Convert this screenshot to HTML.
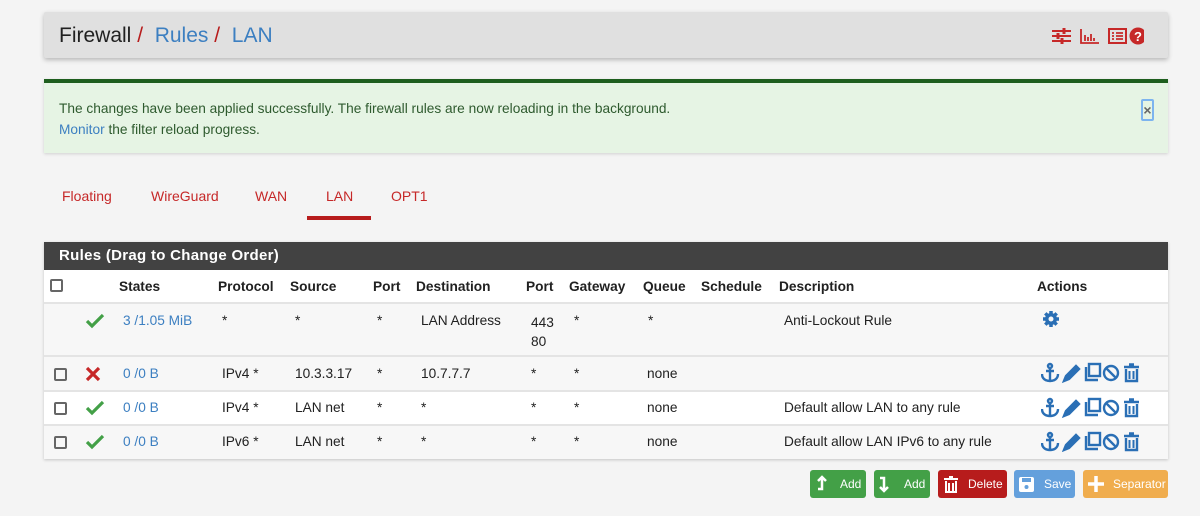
<!DOCTYPE html>
<html><head><meta charset="utf-8"><style>
*{box-sizing:border-box;margin:0;padding:0}
body{width:1200px;height:516px;background:#f4f4f4;font-family:"Liberation Sans",sans-serif;font-size:14px;color:#212121;position:relative;overflow:hidden}
.hdr{position:absolute;left:44px;top:12px;width:1124px;height:46px;background:#e0e0e0;box-shadow:0 2px 5px rgba(0,0,0,.25);border-radius:2px}
.hdr h1{position:absolute;left:15px;top:12px;font-size:21px;font-weight:normal;color:#212121}
.hdr h1 span.l{color:#3c7fc1}.hdr h1 span.s{color:#b71c1c}
.alert{position:absolute;left:44px;top:79px;width:1124px;height:74px;background:#e6f4e4;border-top:4px solid #1e5e1e;box-shadow:0 1px 3px rgba(0,0,0,.15);color:#2e5a2e;font-size:13.7px}
.alert p{position:absolute;left:15px;line-height:21px}
.close{position:absolute;left:1097px;top:16px;width:13px;height:22px;border:2px solid #7db4ef;border-radius:2px;color:#666;font-size:14px;font-weight:bold;text-align:center;line-height:18px}
.tab{position:absolute;top:188px;color:#c62828;font-size:14px}
.tabline{position:absolute;left:307px;top:216px;width:64px;height:4px;background:#b71c1c}
.panel{position:absolute;left:44px;top:242px;width:1124px;height:217px;background:#fff;box-shadow:0 1px 3px rgba(0,0,0,.2)}
.ph{height:28px;background:#424242;color:#fff;font-size:15px;font-weight:bold;padding:5px 15px;letter-spacing:.3px}
.row{position:absolute;left:0;width:1124px;border-top:2px solid #e4e4e4}
.c{position:absolute;font-size:13.7px}
.b{font-weight:bold}
.lnk{color:#3c7fc1}
.cb{position:absolute;width:13px;height:13px;border:2px solid #666;border-radius:2px}
.btn{position:absolute;top:470px;height:28px;border-radius:3px;color:#fff;font-size:12px;line-height:28px}
.ok,.no{position:absolute;left:41px}
</style></head><body>
<div class="hdr"><h1>Firewall <span class="s">/</span>&nbsp; <span class="l">Rules</span> <span class="s">/</span>&nbsp; <span class="l">LAN</span></h1>
<svg style="position:absolute;left:1008px;top:14px" width="92" height="20" viewBox="0 0 92 20">
<g stroke="#c62828" stroke-width="2" fill="none"><path d="M0 5h19M0 10h19M0 15h19"/><path d="M12 2v6M6 7v6M10 12v6" stroke-width="3"/></g>
<g stroke="#c62828" stroke-width="1.8" fill="none"><path d="M29 3v14h18"/><path d="M33 9v6M36 11v4M39 8v7M42 12v3"/></g>
<rect x="57" y="3" width="17" height="14" fill="none" stroke="#c62828" stroke-width="2"/><g stroke="#c62828" stroke-width="1.8"><path d="M60 7h2M64 7h7M60 10h2M64 10h7M60 13h2M64 13h7"/></g>
<circle cx="86" cy="10" r="8.5" fill="#c62828"/><text x="86" y="15" font-size="13" font-weight="bold" fill="#fff" text-anchor="middle" font-family="Liberation Sans">?</text>
</svg></div>
<div class="alert"><p style="top:15px">The changes have been applied successfully. The firewall rules are now reloading in the background.</p><p style="top:36px"><span class="lnk">Monitor</span> the filter reload progress.</p><div class="close">×</div></div>
<div class="tab" style="left:62px">Floating</div><div class="tab" style="left:151px">WireGuard</div><div class="tab" style="left:255px">WAN</div><div class="tab" style="left:326px">LAN</div><div class="tab" style="left:391px">OPT1</div>
<div class="tabline"></div>
<div class="panel"><div class="ph">Rules (Drag to Change Order)</div>
<div class="row" style="top:28px;height:32px;border:none">
<div class="cb" style="left:6px;top:9px"></div>
<div class="c b" style="left:75px;top:9px">States</div><div class="c b" style="left:174px;top:9px">Protocol</div><div class="c b" style="left:246px;top:9px">Source</div><div class="c b" style="left:329px;top:9px">Port</div><div class="c b" style="left:372px;top:9px">Destination</div><div class="c b" style="left:482px;top:9px">Port</div><div class="c b" style="left:525px;top:9px">Gateway</div><div class="c b" style="left:599px;top:9px">Queue</div><div class="c b" style="left:657px;top:9px">Schedule</div><div class="c b" style="left:735px;top:9px">Description</div><div class="c b" style="left:993px;top:9px">Actions</div></div>
<div class="row" style="top:60px;height:53px;background:#f7f7f7">
<svg class="ok" style="top:9px" width="20" height="16"><path d="M2 8l5 5L18 2" stroke="#43a047" stroke-width="3.2" fill="none"/></svg>
<div class="c lnk" style="left:79px;top:9px">3 /1.05 MiB</div><div class="c" style="left:178px;top:9px">*</div><div class="c" style="left:251px;top:9px">*</div><div class="c" style="left:333px;top:9px">*</div><div class="c" style="left:377px;top:9px">LAN Address</div><div class="c" style="left:487px;top:9px;line-height:19px">443<br>80</div><div class="c" style="left:530px;top:9px">*</div><div class="c" style="left:604px;top:9px">*</div><div class="c" style="left:740px;top:9px">Anti-Lockout Rule</div>
<svg style="position:absolute;left:998px;top:6px" width="18" height="18" viewBox="0 0 18 18"><g fill="#2a6fb5"><circle cx="9" cy="9" r="6"/><g stroke="#2a6fb5" stroke-width="3.5"><path d="M9 1v16M1 9h16M3.3 3.3l11.4 11.4M14.7 3.3L3.3 14.7"/></g></g><circle cx="9" cy="9" r="2.5" fill="#f7f7f7"/></svg></div>
<div class="row" style="top:113px;height:35px;background:#f7f7f7">
<div class="cb" style="left:10px;top:11px"></div>
<svg class="no" style="top:9px" width="16" height="16"><path d="M2 2l12 12M14 2L2 14" stroke="#c62828" stroke-width="3.2"/></svg>
<div class="c lnk" style="left:79px;top:9px">0 /0 B</div><div class="c" style="left:178px;top:9px">IPv4 *</div><div class="c" style="left:251px;top:9px">10.3.3.17</div><div class="c" style="left:333px;top:9px">*</div><div class="c" style="left:377px;top:9px">10.7.7.7</div><div class="c" style="left:487px;top:9px">*</div><div class="c" style="left:530px;top:9px">*</div><div class="c" style="left:603px;top:9px">none</div>
</div>
<div class="row" style="top:148px;height:34px;background:#fff">
<div class="cb" style="left:10px;top:10px"></div>
<svg class="ok" style="top:8px" width="20" height="16"><path d="M2 8l5 5L18 2" stroke="#43a047" stroke-width="3.2" fill="none"/></svg>
<div class="c lnk" style="left:79px;top:8px">0 /0 B</div><div class="c" style="left:178px;top:8px">IPv4 *</div><div class="c" style="left:251px;top:8px">LAN net</div><div class="c" style="left:333px;top:8px">*</div><div class="c" style="left:377px;top:8px">*</div><div class="c" style="left:487px;top:8px">*</div><div class="c" style="left:530px;top:8px">*</div><div class="c" style="left:603px;top:8px">none</div><div class="c" style="left:740px;top:8px">Default allow LAN to any rule</div></div>
<div class="row" style="top:182px;height:35px;background:#f7f7f7">
<div class="cb" style="left:10px;top:10px"></div>
<svg class="ok" style="top:8px" width="20" height="16"><path d="M2 8l5 5L18 2" stroke="#43a047" stroke-width="3.2" fill="none"/></svg>
<div class="c lnk" style="left:79px;top:8px">0 /0 B</div><div class="c" style="left:178px;top:8px">IPv6 *</div><div class="c" style="left:251px;top:8px">LAN net</div><div class="c" style="left:333px;top:8px">*</div><div class="c" style="left:377px;top:8px">*</div><div class="c" style="left:487px;top:8px">*</div><div class="c" style="left:530px;top:8px">*</div><div class="c" style="left:603px;top:8px">none</div><div class="c" style="left:740px;top:8px">Default allow LAN IPv6 to any rule</div></div>
</div>
<svg style="position:absolute;left:1041px;top:362px" width="105" height="90" viewBox="0 0 105 90">
<defs><g id="a" fill="none" stroke="#2a6fb5" stroke-width="2.4">
<circle cx="9" cy="3" r="2"/><path d="M9 5v13M5 8h8M1 11c0 5 4 7 8 7s8-2 8-7"/>
<path d="M23 18l2-5 10-10 3 3-10 10z" fill="#2a6fb5"/>
<rect x="48" y="1" width="11" height="12"/><path d="M45 4v13h12"/>
<circle cx="70" cy="10" r="7"/><path d="M65 5l10 10"/>
<path d="M83 4h15M88 1.5h5M85 6v12h11V6" /><path d="M88.5 8v8M92.5 8v8" stroke-width="2"/></g></defs>
<use href="#a" y="1"/><use href="#a" y="36"/><use href="#a" y="70"/></svg>
<div class="btn" style="left:810px;width:56px;background:#43a047"><svg style="position:absolute;left:6px;top:5px" width="12" height="18"><path d="M6 2v12H2M2 6l4-4 4 4" stroke="#fff" stroke-width="2.5" fill="none"/></svg><span style="position:absolute;left:30px">Add</span></div>
<div class="btn" style="left:874px;width:56px;background:#43a047"><svg style="position:absolute;left:4px;top:5px" width="12" height="18"><path d="M2 3h4v12M2 12l4 4 4-4" stroke="#fff" stroke-width="2.5" fill="none"/></svg><span style="position:absolute;left:30px">Add</span></div>
<div class="btn" style="left:938px;width:69px;background:#b71c1c"><svg style="position:absolute;left:5px;top:6px" width="16" height="17"><path d="M1 3h14M6 1h4M3 5v11h10V5M6 7v8M10 7v8" stroke="#fff" stroke-width="2" fill="none"/></svg><span style="position:absolute;left:30px">Delete</span></div>
<div class="btn" style="left:1014px;width:61px;background:#64a0dc"><svg style="position:absolute;left:4px;top:6px" width="17" height="17"><rect x="1" y="1" width="15" height="15" rx="2" fill="#fff"/><rect x="4" y="2" width="9" height="4" fill="#64a0dc"/><circle cx="8.5" cy="11" r="2" fill="#64a0dc"/></svg><span style="position:absolute;left:30px">Save</span></div>
<div class="btn" style="left:1083px;width:85px;background:#f0ad4e"><svg style="position:absolute;left:4px;top:5px" width="18" height="18"><path d="M9 1v16M1 9h16" stroke="#fff" stroke-width="3.5"/></svg><span style="position:absolute;left:30px">Separator</span></div>
</body></html>
